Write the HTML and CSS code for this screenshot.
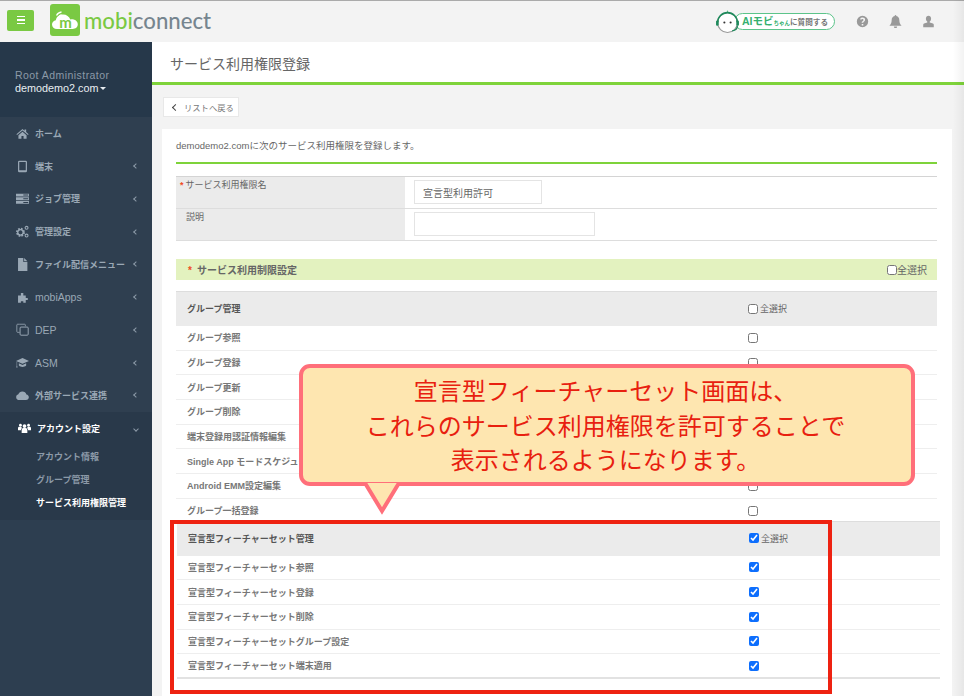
FILE: index.html
```html
<!DOCTYPE html>
<html lang="ja">
<head>
  <meta charset="UTF-8">
  <title>サービス利用権限登録</title>
  <link rel="stylesheet" href="styles.css">
</head>
<body>

<header class="topbar">
  <button class="menu-btn"><span></span><span></span><span></span></button>
  <svg class="logo-mark" viewBox="0 0 30 32">
    <rect width="30" height="32" rx="3" fill="#7ac943"/>
    <path d="M7 25c-3 0-5-2-5-4.500 0-2.300 1.700-4 3.800-4.300C6.500 12.500 9.500 10.500 13 10.500c3.500 0 6.300 2 7.300 5 .5-.1 1-.2 1.500-.2 3.400 0 6 2.200 6 5s-2.300 4.700-5 4.700z" fill="#fff"/>
    <path d="M6.500 11.500c1-2 3-3.300 5-3.500M8.800 13c.6-1 1.600-1.800 2.700-2" fill="none" stroke="#fff" stroke-width="1.300"/>
    <text x="15.500" y="24" text-anchor="middle" class="logo-m">m</text>
  </svg>
  <div class="logo-text"><span class="logo-green">mobi</span>connect</div>

  <div class="top-right">
    <div class="ai-link">
      <svg class="ai-face" viewBox="0 0 24 24">
        <path d="M12 1l1 2.500h-2z" fill="#5cc48a"/>
        <circle cx="12" cy="13" r="9.500" fill="#fff" stroke="#999" stroke-width="1"/>
        <path d="M2.500 13a9.500 9.500 0 0 1 19 0" fill="none" stroke="#1f8a5c" stroke-width="1.500"/>
        <rect x="1" y="11" width="2.500" height="5" rx="1" fill="#1f8a5c"/>
        <rect x="20.500" y="11" width="2.500" height="5" rx="1" fill="#1f8a5c"/>
        <path d="M21.500 16c0 3-2 4.500-5 5" fill="none" stroke="#1f8a5c" stroke-width="1.200"/>
        <circle cx="9" cy="13" r="1" fill="#333"/>
        <circle cx="15" cy="13" r="1" fill="#333"/>
      </svg>
      <div class="ai-pill"><b>AIモビ</b><small>ちゃん</small><span>に質問する</span></div>
    </div>
    <svg class="top-icon" viewBox="0 0 16 16"><path fill-rule="evenodd" d="M8 1a7 7 0 1 0 0 14A7 7 0 0 0 8 1zM7 11h2v2H7zm0-1.500V9c0-1.200 2.200-1.500 2.200-3 0-.7-.6-1.100-1.300-1.100-.8 0-1.300.4-1.700 1L4.900 5c.6-1 1.700-1.800 3.200-1.800 1.800 0 3.100 1 3.100 2.700 0 2.200-2.300 2.400-2.300 3.600z"/></svg>
    <svg class="top-icon" viewBox="0 0 16 16"><path d="M8 0c-.6 0-1 .4-1 1v.3C4.500 1.800 3.300 3.800 3.300 6.200c0 4-1.300 5.300-2.800 7h15c-1.500-1.700-2.800-3-2.800-7 0-2.400-1.200-4.400-3.700-4.900V1c0-.6-.4-1-1-1zM6 14.200a2 2 0 0 0 4 0z"/></svg>
    <svg class="top-icon" viewBox="0 0 16 16"><path d="M8 1c-1.900 0-3.200 1.500-3.200 3.600 0 1.400.7 2.800 1.700 3.400v1.100L2.500 10.500c-.6.300-1 .8-1 1.500v3h13v-3c0-.7-.4-1.200-1-1.500L9.500 9.100V8c1-.6 1.700-2 1.700-3.400C11.200 2.500 9.900 1 8 1z"/></svg>
  </div>
</header>

<div class="layout">
  <aside class="sidebar">
    <div class="user-box">
      <div class="user-role">Root Administrator</div>
      <div class="user-domain">demodemo2.com<i class="caret"></i></div>
    </div>

    <nav>
      <a class="nav-item">
        <svg viewBox="0 0 16 16"><path d="M8 2.500L.5 8.800l.8.9L8 4.200l6.700 5.500.8-.9-3-2.500V3h-2v1.700zM3 10v4.500h3.700v-3.300h2.600v3.300H13V10L8 5.800z"/></svg>
        ホーム
      </a>
      <a class="nav-item">
        <svg viewBox="0 0 16 16"><path fill-rule="evenodd" d="M4 1h8a1.500 1.500 0 0 1 1.500 1.500v11A1.500 1.500 0 0 1 12 15H4a1.500 1.500 0 0 1-1.500-1.500v-11A1.500 1.500 0 0 1 4 1zm0 1.500V12.500h8V2.500z"/></svg>
        端末<i class="chev"></i>
      </a>
      <a class="nav-item">
        <svg viewBox="0 0 16 16"><path d="M0 2h16v3.500H0zM0 6.500h16V10H0zM0 11h16v3.500H0z"/><path d="M9 3h6v1.200H9zM9 7.600h6v1.200H9zM9 12.200h6v1.200H9z" fill="#2f3f50"/></svg>
        ジョブ管理<i class="chev"></i>
      </a>
      <a class="nav-item">
        <svg viewBox="0 0 16 16"><circle cx="5.500" cy="9" r="4.200" fill="none" stroke="currentColor" stroke-width="2.600" stroke-dasharray="2 1.300"/><circle cx="5.500" cy="9" r="3.400" fill="none" stroke="currentColor" stroke-width="1.500"/><circle cx="13" cy="3.500" r="1.800" fill="none" stroke="currentColor" stroke-width="1.300"/><circle cx="13" cy="13" r="1.800" fill="none" stroke="currentColor" stroke-width="1.300"/></svg>
        管理設定<i class="chev"></i>
      </a>
      <a class="nav-item">
        <svg viewBox="0 0 16 16"><path d="M2.500 0H9v5h5v11H2.500zM10 0l4 4h-4z"/></svg>
        ファイル配信メニュー<i class="chev"></i>
      </a>
      <a class="nav-item nav-latin">
        <svg viewBox="0 0 16 16"><path d="M6 2.500h3v3h3v3h2.500v2.500H12v3.500H9v-2H6v2H2.500v-9H6z"/></svg>
        mobiApps<i class="chev"></i>
      </a>
      <a class="nav-item nav-latin">
        <svg viewBox="0 0 16 16"><path d="M4.500 1.500H2A1 1 0 0 0 1 2.500v8a1 1 0 0 0 1 1h2.500M11.500 4V2.500a1 1 0 0 0-1-1H4.500" fill="none" stroke="currentColor" stroke-width="1"/><rect x="5" y="5" width="10" height="10" rx="1.200" fill="none" stroke="currentColor" stroke-width="1.200"/></svg>
        DEP<i class="chev"></i>
      </a>
      <a class="nav-item nav-latin">
        <svg viewBox="0 0 16 16"><path d="M8 2.500L0 6l8 3.500L16 6zM3.500 9v2.800c1.300 1.200 2.800 1.700 4.500 1.700s3.200-.5 4.500-1.700V9L8 11zM.8 7v5l-.6 2h1.800l-.6-2V7.300z"/></svg>
        ASM<i class="chev"></i>
      </a>
      <a class="nav-item">
        <svg viewBox="0 0 16 16"><path d="M4 13.500c-2.200 0-3.800-1.500-3.800-3.500 0-1.700 1.100-3 2.700-3.400C3.500 4.300 5.500 3 7.800 3c2.500 0 4.500 1.500 5 3.800 1.800.3 3 1.600 3 3.300 0 1.900-1.500 3.400-3.600 3.400z"/></svg>
        外部サービス連携<i class="chev"></i>
      </a>
    </nav>

    <div class="nav-open">
      <a class="nav-item nav-item-active">
        <svg viewBox="0 0 16 16"><circle cx="8" cy="5" r="2.300"/><circle cx="3" cy="4" r="1.700"/><circle cx="13" cy="4" r="1.700"/><path d="M4.500 13.500V10c0-1.500 1-2.500 2-2.500h3c1 0 2 1 2 2.500v3.500zM0 10V7.500c0-1 .7-1.700 1.500-1.700H4c.2.700.5 1.200 1 1.600C4 8 3.500 9 3.500 10zM16 10V7.500c0-1-.7-1.700-1.500-1.700H12c-.2.700-.5 1.200-1 1.600 1 .6 1.500 1.600 1.500 2.600z"/></svg>
        アカウント設定<i class="chev chev-down"></i>
      </a>
      <a class="nav-sub">アカウント情報</a>
      <a class="nav-sub">グループ管理</a>
      <a class="nav-sub nav-sub-active">サービス利用権限管理</a>
    </div>
  </aside>

  <main class="main">
    <div class="page-head"><h1>サービス利用権限登録</h1></div>

    <div class="page-body">
      <a class="back-btn"><i class="back-arrow"></i>リストへ戻る</a>

      <section class="panel">
        <p class="intro">demodemo2.comに次のサービス利用権限を登録します。</p>

        <div class="form-table">
          <div class="form-row">
            <div class="form-label"><em>*</em>サービス利用権限名</div>
            <div class="form-value"><input class="input-name" type="text" value="宣言型利用許可"></div>
          </div>
          <div class="form-row">
            <div class="form-label form-label-plain">説明</div>
            <div class="form-value"><input class="input-desc" type="text"></div>
          </div>
        </div>

        <div class="limit-bar">
          <span><em>*</em>サービス利用制限設定</span>
          <label><input type="checkbox">全選択</label>
        </div>

        <div class="perm-table">
          <div class="perm-head"><span>グループ管理</span><label><input type="checkbox">全選択</label></div>
          <div class="perm-row"><span>グループ参照</span><input type="checkbox"></div>
          <div class="perm-row"><span>グループ登録</span><input type="checkbox"></div>
          <div class="perm-row"><span>グループ更新</span><input type="checkbox"></div>
          <div class="perm-row"><span>グループ削除</span><input type="checkbox"></div>
          <div class="perm-row"><span>端末登録用認証情報編集</span><input type="checkbox"></div>
          <div class="perm-row"><span>Single App モードスケジュール</span><input type="checkbox"></div>
          <div class="perm-row"><span>Android EMM設定編集</span><input type="checkbox"></div>
          <div class="perm-row"><span>グループ一括登録</span><input type="checkbox"></div>
        </div>

        <div class="perm-table perm-table-wide">
          <div class="perm-head"><span>宣言型フィーチャーセット管理</span><label><input type="checkbox" checked>全選択</label></div>
          <div class="perm-row"><span>宣言型フィーチャーセット参照</span><input type="checkbox" checked></div>
          <div class="perm-row"><span>宣言型フィーチャーセット登録</span><input type="checkbox" checked></div>
          <div class="perm-row"><span>宣言型フィーチャーセット削除</span><input type="checkbox" checked></div>
          <div class="perm-row"><span>宣言型フィーチャーセットグループ設定</span><input type="checkbox" checked></div>
          <div class="perm-row perm-row-last"><span>宣言型フィーチャーセット端末適用</span><input type="checkbox" checked></div>
        </div>
      </section>
    </div>
  </main>
</div>

<!-- 説明用の吹き出しと赤枠 -->
<div class="callout">
  <p>宣言型フィーチャーセット画面は、</p>
  <p>これらのサービス利用権限を許可することで</p>
  <p>表示されるようになります。</p>
  <svg class="callout-tail" viewBox="0 0 38 32"><path d="M2 0l17 28L36 0" fill="#fee6b0" stroke="#ff6f7a" stroke-width="4"/></svg>
</div>
<div class="red-box"></div>
<div class="edge-shade"></div>

</body>
</html>
```

FILE: styles.css
```css
* {
  box-sizing: border-box;
}
html, body {
  height: 100%;
}
body {
  margin: 0;
  overflow: hidden;
  background: #f3f3f3;
  font-family: "Liberation Sans", "Noto Sans CJK JP", sans-serif;
  font-size: 9px;
  color: #666;
}
p, h1 {
  margin: 0;
}

/* top bar */
.topbar {
  display: flex;
  align-items: center;
  height: 42px;
  padding: 0 29px 0 7px;
  background: #f3f3f3;
  border-top: 1px solid #aaa;
}
.menu-btn {
  display: flex;
  flex-direction: column;
  justify-content: center;
  align-items: center;
  gap: 2px;
  width: 27px;
  height: 21px;
  padding: 0;
  margin-top: -3px;
  background: #7ac943;
  border: 0;
  border-radius: 2px;
}
.menu-btn span {
  width: 8px;
  height: 1.500px;
  background: #fff;
}
.logo-mark {
  width: 30px;
  height: 32px;
  margin: -4px 0 0 16px;
}
.logo-m {
  font-family: "Lato", sans-serif;
  font-size: 15px;
  font-weight: 700;
  fill: #7ac943;
}
.logo-text {
  margin: -3px 0 0 4px;
  font-family: "Lato", sans-serif;
  font-size: 22.200px;
  font-weight: 500;
  color: #76858f;
}
.logo-green {
  color: #7ac943;
}
.top-right {
  display: flex;
  align-items: center;
  margin-left: auto;
}
.ai-link {
  display: flex;
  align-items: center;
  margin-right: 21px;
}
.ai-face {
  position: relative;
  z-index: 1;
  width: 25px;
  height: 25px;
  margin-right: -6px;
}
.ai-pill {
  display: flex;
  align-items: baseline;
  height: 17px;
  padding: 0 6px 0 7px;
  line-height: 15px;
  background: #fff;
  border: 1px solid #5cc48a;
  border-radius: 9px;
  white-space: nowrap;
}
.ai-pill b {
  font-size: 10.500px;
  color: #35b06f;
}
.ai-pill small {
  font-size: 5.500px;
  font-weight: 700;
  color: #35b06f;
}
.ai-pill span {
  font-size: 7.600px;
  font-weight: 700;
  color: #777;
}
.top-icon {
  width: 13px;
  height: 13px;
  margin-left: 20px;
  fill: #999;
}
.top-icon:first-of-type {
  margin-left: 0;
}

.layout {
  display: flex;
  height: 654px;
}

/* sidebar */
.sidebar {
  flex: none;
  width: 152px;
  background: #2d3e50;
  color: #9aa8b5;
}
.user-box {
  height: 75px;
  padding: 27px 0 0 15px;
  background: #26384a;
  font-size: 10.500px;
  line-height: 13px;
}
.user-role {
  color: #8c9aa8;
  letter-spacing: .45px;
}
.user-domain {
  font-size: 10.800px;
  color: #e8edf1;
}
.caret {
  display: inline-block;
  width: 0;
  height: 0;
  margin-left: 2px;
  vertical-align: 2px;
  border-left: 3px solid transparent;
  border-right: 3px solid transparent;
  border-top: 3px solid #e8edf1;
}
.nav-item {
  display: flex;
  align-items: center;
  height: 32.750px;
  padding: 0 14px 0 16px;
  background: #2f3f50;
  font-weight: 700;
  white-space: nowrap;
}
.nav-item svg {
  flex: none;
  width: 13px;
  height: 13px;
  margin-right: 6px;
  fill: currentColor;
}
.nav-latin {
  font-size: 10.500px;
  font-weight: 400;
}
.chev {
  width: 4px;
  height: 4px;
  margin-left: auto;
  border-left: 1px solid #8c9aa8;
  border-bottom: 1px solid #8c9aa8;
  transform: rotate(45deg);
}
.chev-down {
  transform: rotate(-45deg);
}
.nav-open {
  height: 108px;
  background: #29394a;
}
.nav-item-active {
  height: 34px;
  padding-left: 18px;
  background: none;
  color: #fff;
}
.nav-sub {
  display: block;
  height: 23px;
  padding-left: 36px;
  line-height: 23px;
  font-weight: 700;
  color: #8c9aa8;
}
.nav-sub-active {
  color: #fff;
}

/* main */
.main {
  flex: 1;
  min-width: 0;
}
.page-head {
  height: 43px;
  padding-left: 18px;
  background: #fff;
  border-bottom: 3px solid #7ed33a;
}
.page-head h1 {
  font-size: 14px;
  font-weight: 400;
  line-height: 44px;
  color: #666;
}
.page-body {
  padding: 12px 12px 0 10px;
}
.back-btn {
  display: flex;
  align-items: center;
  width: 76px;
  height: 20px;
  margin-left: 1px;
  padding-left: 9px;
  background: #fff;
  border: 1px solid #e8e8e8;
  font-size: 8.300px;
  color: #777;
}
.back-arrow {
  width: 5px;
  height: 5px;
  margin-right: 6px;
  border-left: 1.500px solid #444;
  border-bottom: 1.500px solid #444;
  transform: rotate(45deg);
}
.panel {
  height: 600px;
  margin-top: 12px;
  padding: 0 15px 0 14px;
  background: #fff;
}
.intro {
  height: 35px;
  border-bottom: 2px solid #7ed33a;
  font-size: 9.500px;
  line-height: 33px;
}
.form-table {
  margin-top: 12px;
  border-top: 1px solid #d4d4d4;
}
.form-row {
  display: flex;
  height: 32px;
  border-bottom: 1px solid #ddd;
}
.form-label {
  flex: none;
  width: 229px;
  padding: 2px 0 0 4px;
  background: #ebebeb;
  line-height: 13px;
}
.form-label em, .limit-bar em {
  font-style: normal;
  font-weight: 700;
  color: #f04b23;
}
.form-label em {
  margin-right: 2px;
}
.form-label-plain {
  padding-left: 10px;
}
.form-value {
  padding: 3px 0 0 9px;
}
.form-value input {
  display: block;
  height: 24px;
  padding: 0 8px;
  background: #fff;
  border: 1px solid #e4e4e4;
  font: 10px "Liberation Sans", "Noto Sans CJK JP", sans-serif;
  color: #666;
}
.input-name {
  width: 128px;
}
.input-desc {
  width: 181px;
}
.limit-bar {
  display: flex;
  justify-content: space-between;
  align-items: center;
  height: 21px;
  margin-top: 18px;
  padding: 0 10px 0 12px;
  background: #e3f2bf;
  font-size: 10px;
  font-weight: 700;
}
.limit-bar em {
  margin-right: 5px;
}
.limit-bar label {
  display: flex;
  align-items: center;
  font-weight: 400;
}

/* permission tables */
input[type="checkbox"] {
  flex: none;
  width: 10px;
  height: 10px;
  margin: 0;
  accent-color: #0d6efd;
}
.perm-table {
  margin-top: 11px;
}
.perm-head, .perm-row {
  display: grid;
  grid-template-columns: 561px 1fr;
  align-items: center;
  padding-left: 11px;
}
.perm-head {
  height: 35px;
  padding-bottom: 1px;
  background: #ebebeb;
  border-top: 1px solid #ddd;
  font-weight: 700;
  color: #555;
}
.perm-head label {
  display: flex;
  align-items: center;
  gap: 2px;
  font-weight: 400;
  color: #666;
}
.perm-row {
  height: 24.700px;
  border-bottom: 1px solid #eee;
  font-weight: 700;
  color: #777;
}
.perm-table-wide {
  margin: -3px -3px 0 1px;
}
.perm-row-last {
  border-bottom: 2px solid #e2e2e2;
}

/* callout overlay */
.callout {
  position: absolute;
  left: 299px;
  top: 364px;
  width: 616px;
  height: 122px;
  padding: 7px 3px 0 0;
  background: #fee6b0;
  border: 4px solid #ff6f7a;
  border-radius: 11px;
  font-size: 24px;
  line-height: 34.500px;
  text-align: center;
  color: #e8200f;
}
.callout-tail {
  position: absolute;
  left: 60px;
  top: 115px;
  width: 38px;
  height: 32px;
}
.red-box {
  position: absolute;
  left: 170px;
  top: 520px;
  width: 662px;
  height: 174px;
  border: 4px solid #ee2211;
}
.edge-shade {
  position: absolute;
  top: 0;
  right: 0;
  bottom: 0;
  width: 11px;
  background: linear-gradient(to right, rgba(0, 0, 0, 0), rgba(0, 0, 0, .05));
}
```
